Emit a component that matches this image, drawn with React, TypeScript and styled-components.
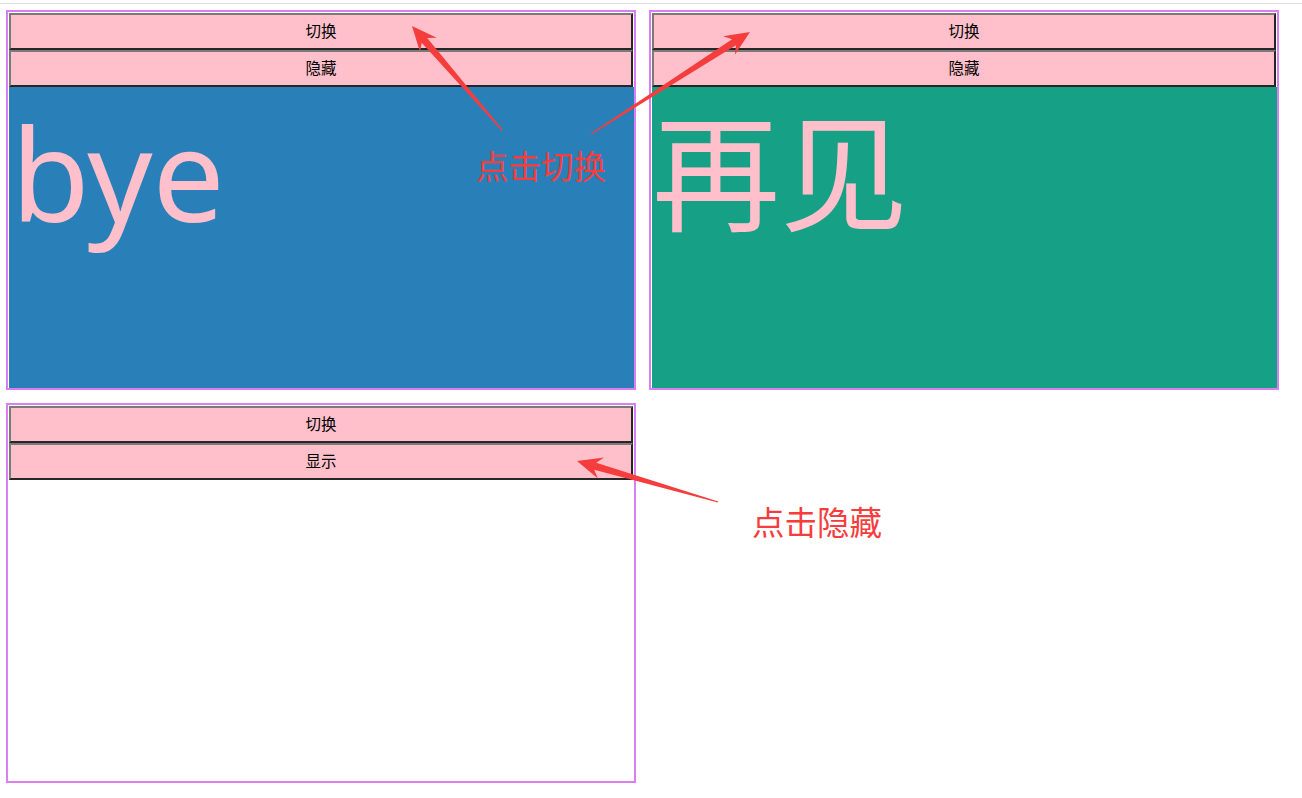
import React from "react";
import styled, { createGlobalStyle } from "styled-components";

const GlobalStyle = createGlobalStyle`
  html, body { margin: 0; padding: 0; background: #ffffff; }
  body { font-family: "Noto Sans", "Noto Sans CJK SC", sans-serif; }
  * { box-sizing: border-box; }
`;

const Page = styled.div`
  position: relative;
  width: 1302px;
  height: 798px;
  overflow: hidden;
`;

const TopRule = styled.div`
  margin-top: 3px;
  height: 1px;
  background: #dddddd;
`;

const Grid = styled.div`
  display: flex;
  flex-wrap: wrap;
  gap: 13px;
  padding: 6px 0 0 6px;
  width: 1302px;
`;

const Box = styled.div`
  width: 630px;
  height: 380px;
  border: 2px solid #da7ff3;
  display: flex;
  flex-direction: column;
  padding-top: 1px;
`;

const Button = styled.button`
  display: block;
  margin: 0 1px;
  height: 37px;
  padding: 0 0 1px;
  border-width: 2px;
  border-style: solid;
  border-color: #7a7a7a #262626 #262626 #7a7a7a;
  background: #ffc0cb;
  color: #000;
  font-family: "Noto Sans CJK SC", sans-serif;
  font-size: 15.5px;
  line-height: 1;
  cursor: pointer;
`;

const Panel = styled.div<{ $bg: string; $indent: number }>`
  flex: 1;
  margin-left: 1px;
  padding-left: ${(p) => p.$indent}px;
  background: ${(p) => p.$bg};
  color: #ffc0cb;
  font-family: "Noto Sans", "Noto Sans CJK SC", sans-serif;
  font-size: 128px;
  line-height: 1.34;
  white-space: nowrap;
`;

const Overlay = styled.svg`
  position: absolute;
  left: 0;
  top: 0;
  pointer-events: none;
`;

const Note = styled.div<{ $x: number; $y: number }>`
  position: absolute;
  left: ${(p) => p.$x}px;
  top: ${(p) => p.$y}px;
  color: #f53d3d;
  font-family: "Noto Sans CJK SC", sans-serif;
  font-size: 32.5px;
  line-height: 1;
  white-space: nowrap;
  pointer-events: none;
`;

function arrowPoints(
  tx: number,
  ty: number,
  px: number,
  py: number,
  headLen = 25,
  headHalf = 11,
  neckBack = 19,
  neckHalf = 3.6,
  tailHalf = 0.6
) {
  const dx = px - tx;
  const dy = py - ty;
  const len = Math.hypot(dx, dy);
  const ux = dx / len;
  const uy = dy / len;
  const nx = -uy;
  const ny = ux;
  const at = (d: number, o: number) =>
    `${(px - ux * d + nx * o).toFixed(1)},${(py - uy * d + ny * o).toFixed(1)}`;
  return [
    at(len, tailHalf),
    at(neckBack, neckHalf),
    at(headLen, headHalf),
    `${px},${py}`,
    at(headLen, -headHalf),
    at(neckBack, -neckHalf),
    at(len, -tailHalf),
  ].join(" ");
}

type BoxData = { label: string; bg?: string; text?: string; indent?: number };

const boxes: BoxData[] = [
  { label: "隐藏", bg: "#2980b9", text: "bye", indent: 2 },
  { label: "隐藏", bg: "#16a085", text: "再见", indent: 0 },
  { label: "显示" },
];

export default function App() {
  return (
    <>
      <GlobalStyle />
      <Page>
        <TopRule />
        <Grid>
          {boxes.map((b, i) => (
            <Box key={i}>
              <Button>切换</Button>
              <Button>{b.label}</Button>
              {b.bg ? (
                <Panel $bg={b.bg} $indent={b.indent ?? 0}>
                  {b.text}
                </Panel>
              ) : null}
            </Box>
          ))}
        </Grid>
        <Overlay width={1302} height={798} viewBox="0 0 1302 798">
          <polygon fill="#f53d3d" points={arrowPoints(502, 130, 412, 26)} />
          <polygon fill="#f53d3d" points={arrowPoints(591, 134, 750, 32)} />
          <polygon fill="#f53d3d" points={arrowPoints(718, 502, 577, 461)} />
        </Overlay>
        <Note $x={476} $y={149}>点击切换</Note>
        <Note $x={752} $y={505}>点击隐藏</Note>
      </Page>
    </>
  );
}
